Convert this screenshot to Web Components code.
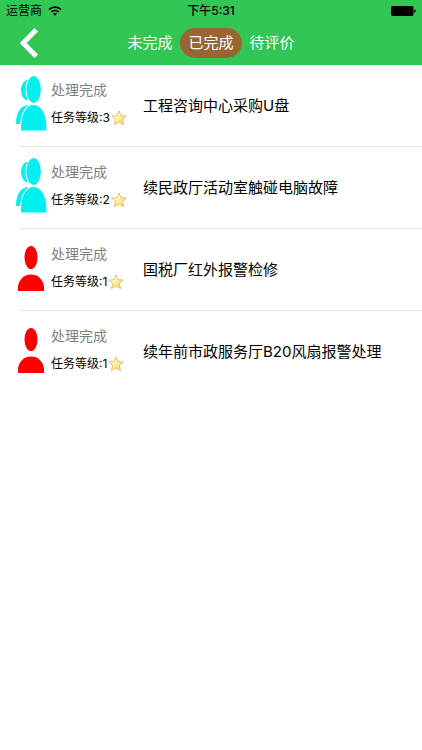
<!DOCTYPE html>
<html lang="zh-CN">
<head>
    <meta charset="utf-8">
    <meta name="viewport" content="width=device-width, initial-scale=1">
    <title>任务列表</title>
    <style>
        body {
            margin: 0;
            background: #FFFFFF;
            color: #000000;
            font-family: Inter, "Noto Sans CJK SC", sans-serif;
        }
    </style>
</head>
<body>
    <task-header>
        <status-bar slot="status" carrier="运营商" time="下午5:31"></status-bar>
        <task-tab>未完成</task-tab>
        <task-tab active>已完成</task-tab>
        <task-tab>待评价</task-tab>
    </task-header>
    <task-list>
        <task-item people="2" status="处理完成" level="3">工程咨询中心采购U盘</task-item>
        <task-item people="2" status="处理完成" level="2">续民政厅活动室触碰电脑故障</task-item>
        <task-item people="1" status="处理完成" level="1">国税厂红外报警检修</task-item>
        <task-item people="1" status="处理完成" level="1">续年前市政服务厅B20风扇报警处理</task-item>
    </task-list>
</body>
<script type="module">
    class StatusBar extends HTMLElement {
        constructor() {
            super();
            this.attachShadow({ mode: 'open' });
        }

        connectedCallback() {
            this.shadowRoot.innerHTML = `
                <style>
                    :host {
                        display: grid;
                        grid-template-columns: 1fr auto 1fr;
                        align-items: center;
                        height: 22px;
                        padding: 0 6px;
                        color: #000000;
                        font-size: 12px;
                        line-height: 22px;
                    }
                    .carrier {
                        display: flex;
                        align-items: center;
                        gap: 6px;
                    }
                    .time {
                        font-weight: 500;
                    }
                    .battery {
                        justify-self: end;
                    }
                    svg {
                        display: block;
                    }
                </style>
                <span class="carrier">
                    ${this.getAttribute('carrier')}
                    <svg width="14" height="10" viewBox="0 0 14 10" fill="none" stroke="#000000" stroke-width="1.7">
                        <path d="M1 3.6 C4.4 .3 9.6 .3 13 3.6"/>
                        <path d="M3.3 6 C5.4 4 8.6 4 10.7 6"/>
                        <path d="M7 9.8 L4.9 7.7 C6.1 6.7 7.9 6.7 9.1 7.7 Z" fill="#000000" stroke="none"/>
                    </svg>
                </span>
                <span class="time">${this.getAttribute('time')}</span>
                <svg class="battery" width="25" height="10" viewBox="0 0 25 10">
                    <rect width="22.5" height="10" rx="1.5"/>
                    <path d="M23.2 3.2 Q24.8 3.6 24.8 5 Q24.8 6.4 23.2 6.8 Z"/>
                </svg>
            `;
        }
    }

    class TaskHeader extends HTMLElement {
        constructor() {
            super();
            this.attachShadow({ mode: 'open' });
            this.shadowRoot.innerHTML = `
                <style>
                    :host {
                        display: block;
                        background: #32C655;
                    }
                    nav {
                        display: grid;
                        grid-template-columns: 1fr auto 1fr;
                        align-items: center;
                        height: 42px;
                        padding-bottom: 1px;
                    }
                    .back {
                        justify-self: start;
                        padding: 0 20px;
                        border: 0;
                        background: none;
                    }
                    .tabs {
                        display: flex;
                    }
                    svg {
                        display: block;
                    }
                </style>
                <slot name="status"></slot>
                <nav>
                    <button class="back" type="button" aria-label="返回">
                        <svg width="18" height="30" viewBox="0 0 18 30" fill="none" stroke="#FFFFFF" stroke-width="5">
                            <path d="M16.2 1.8 L3.2 15 L16.2 28.2"/>
                        </svg>
                    </button>
                    <div class="tabs"><slot></slot></div>
                </nav>
            `;
        }
    }

    class TaskTab extends HTMLElement {
        constructor() {
            super();
            this.attachShadow({ mode: 'open' });
            this.shadowRoot.innerHTML = `
                <style>
                    :host {
                        display: block;
                    }
                    button {
                        display: block;
                        height: 30px;
                        padding: 0 8px;
                        border: 0;
                        border-radius: 15px;
                        background: none;
                        color: #FFFFFF;
                        font-family: inherit;
                        font-size: 15px;
                        line-height: 30px;
                    }
                    :host([active]) button {
                        background: #996633;
                    }
                </style>
                <button type="button"><slot></slot></button>
            `;
        }

        connectedCallback() {
            this.addEventListener('click', () => {
                this.parentElement.querySelectorAll('task-tab').forEach(tab => {
                    tab.toggleAttribute('active', tab === this);
                });
            });
        }
    }

    class TaskList extends HTMLElement {
        constructor() {
            super();
            this.attachShadow({ mode: 'open' });
            this.shadowRoot.innerHTML = `
                <style>
                    :host {
                        display: block;
                    }
                    ::slotted(:last-child) {
                        --line: transparent;
                    }
                </style>
                <slot></slot>
            `;
        }
    }

    const ONE_PERSON = `
        <g fill="#FF0000">
            <ellipse cx="16" cy="18.5" rx="6.5" ry="11.5"/>
            <path d="M3 52 V47.5 C4 40 9.5 35.5 16 35.5 C22.5 35.5 28 40 29 47.5 V52 Z"/>
        </g>
    `;

    const TWO_PEOPLE = `
        <g fill="#00F0F0">
            <ellipse cx="13.5" cy="15" rx="7.5" ry="10.5"/>
            <path d="M1 49 C1 38 5 31 13 30 V49 Z"/>
            <g stroke="#FFFFFF" stroke-width="1.2">
                <ellipse cx="18.7" cy="14.5" rx="7.8" ry="14"/>
                <path d="M5.5 56 V50 C6.5 36 12 29.5 18.5 29.5 C25 29.5 31 36 32 50 V56 Z"/>
            </g>
        </g>
    `;

    class TaskItem extends HTMLElement {
        constructor() {
            super();
            this.attachShadow({ mode: 'open' });
        }

        connectedCallback() {
            const people = this.getAttribute('people') === '2' ? TWO_PEOPLE : ONE_PERSON;
            this.shadowRoot.innerHTML = `
                <style>
                    :host {
                        display: block;
                    }
                    .row {
                        display: grid;
                        grid-template-columns: 32px 88px 1fr;
                        column-gap: 4px;
                        align-items: center;
                        min-height: 81px;
                        padding: 0 15px;
                    }
                    .people {
                        align-self: start;
                        padding-top: 10px;
                    }
                    .line {
                        height: 1px;
                        margin-left: 20px;
                        background: var(--line, #E4E4E6);
                    }
                    .info {
                        display: grid;
                        align-self: start;
                        row-gap: 8px;
                        padding-top: 15px;
                    }
                    .status {
                        color: #808080;
                        font-size: 14px;
                        line-height: 20px;
                    }
                    .level {
                        display: flex;
                        align-items: center;
                        gap: 1px;
                        font-size: 12px;
                        line-height: 20px;
                        white-space: nowrap;
                    }
                    .title {
                        font-size: 15px;
                        line-height: 20px;
                    }
                    svg {
                        display: block;
                    }
                </style>
                <div class="row">
                    <svg class="people" width="32" height="56" viewBox="0 0 32 56">${people}</svg>
                    <div class="info">
                        <span class="status">${this.getAttribute('status')}</span>
                        <span class="level">
                            任务等级:${this.getAttribute('level')}
                            <svg width="16" height="16" viewBox="0 0 16 16">
                                <defs>
                                    <linearGradient id="gold" x1="0" y1="0" x2="1" y2="1">
                                        <stop offset="0.3" stop-color="#FFFBD8"/>
                                        <stop offset="1" stop-color="#FAD040"/>
                                    </linearGradient>
                                </defs>
                                <path d="M8 1 L10 5.6 L15.2 6.1 L11.3 9.5 L12.6 14.6 L8 11.9 L3.4 14.6 L4.7 9.5 L0.8 6.1 L6 5.6 Z"
                                    fill="url(#gold)" stroke="#DDB050" stroke-width="0.8" stroke-linejoin="round"/>
                            </svg>
                        </span>
                    </div>
                    <span class="title"><slot></slot></span>
                </div>
                <div class="line"></div>
            `;
        }
    }

    customElements.define('status-bar', StatusBar);
    customElements.define('task-header', TaskHeader);
    customElements.define('task-tab', TaskTab);
    customElements.define('task-list', TaskList);
    customElements.define('task-item', TaskItem);
</script>
</html>
